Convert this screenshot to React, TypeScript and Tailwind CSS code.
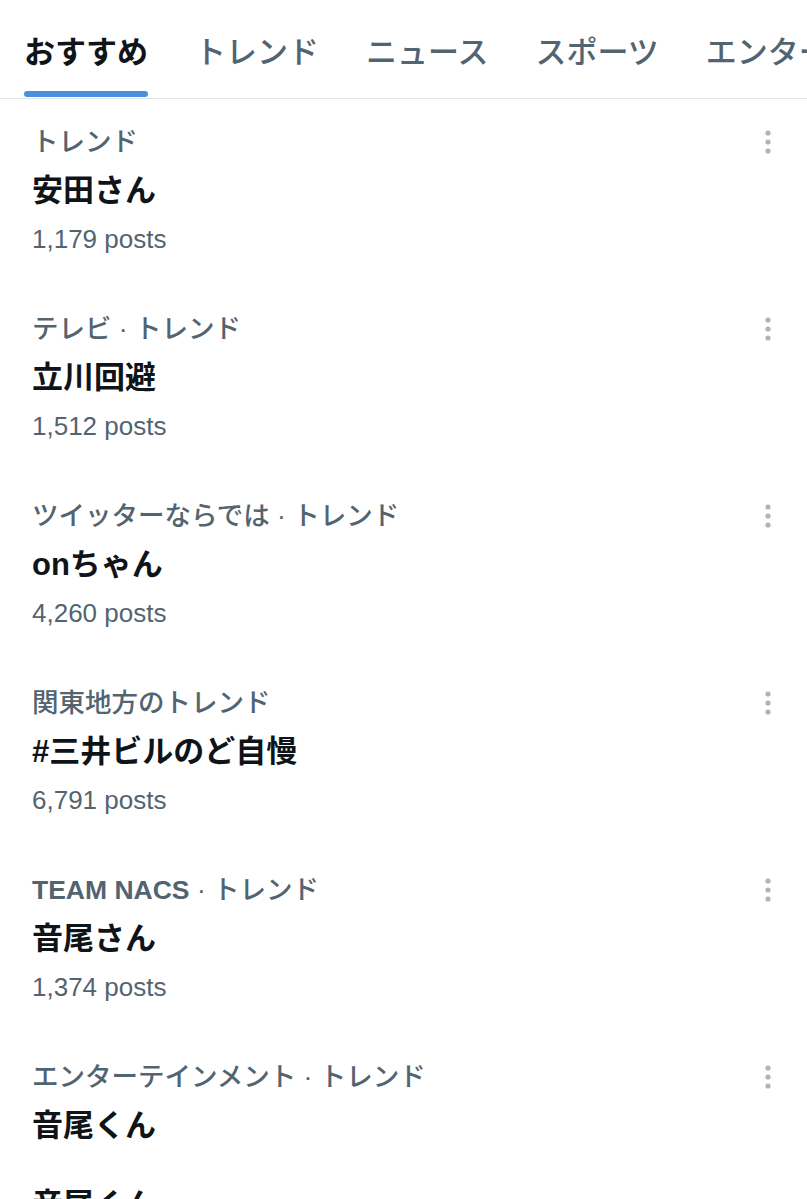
import React from "react";

const font = { fontFamily: '"Liberation Sans", "Noto Sans CJK JP", sans-serif' };

const tabs = ["おすすめ", "トレンド", "ニュース", "スポーツ", "エンターテイメント"];

const items: { cat: React.ReactNode; title: string; posts?: string }[] = [
  { cat: "トレンド", title: "安田さん", posts: "1,179 posts" },
  { cat: "テレビ · トレンド", title: "立川回避", posts: "1,512 posts" },
  { cat: "ツイッターならでは · トレンド", title: "onちゃん", posts: "4,260 posts" },
  { cat: "関東地方のトレンド", title: "#三井ビルのど自慢", posts: "6,791 posts" },
  {
    cat: (
      <>
        <span className="font-bold">TEAM NACS</span> · トレンド
      </>
    ),
    title: "音尾さん",
    posts: "1,374 posts",
  },
  { cat: "エンターテインメント · トレンド", title: "音尾くん" },
];

function Dots() {
  return (
    <svg width="10" height="26" viewBox="0 0 10 26" className="shrink-0">
      <circle cx="5" cy="4" r="2.6" fill="#aeb4ba" />
      <circle cx="5" cy="13" r="2.6" fill="#aeb4ba" />
      <circle cx="5" cy="22" r="2.6" fill="#aeb4ba" />
    </svg>
  );
}

export default function App() {
  return (
    <div className="w-[807px] h-[1199px] overflow-hidden bg-white" style={font}>
      <div className="h-[99px] border-b border-[#dfe5ea] flex items-stretch pl-[24px] gap-[47px] overflow-hidden whitespace-nowrap">
        {tabs.map((t, i) => (
          <div key={t} className="relative flex items-start pt-[34px]">
            <span
              className={
                "text-[31px] leading-[38px] " +
                (i === 0 ? "font-bold text-[#0f1419]" : "font-medium text-[#536471]")
              }
            >
              {t}
            </span>
            {i === 0 && (
              <div className="absolute left-0 right-0 bottom-[1px] h-[6px] rounded-full bg-[#4a90dc]" />
            )}
          </div>
        ))}
      </div>
      {items.map((it) => (
        <div key={it.title} className="h-[187px] pl-[32px] pr-[34px] pt-[25px] flex justify-between">
          <div className="flex flex-col">
            <div className="text-[26.5px] leading-[36px] font-medium text-[#536471] whitespace-nowrap">{it.cat}</div>
            <div className="mt-[9px] text-[31px] leading-[44px] font-bold text-[#0f1419]">{it.title}</div>
            {it.posts ? (
              <div className="mt-[8px] text-[26px] leading-[36px] text-[#536471]">{it.posts}</div>
            ) : (
              <div className="mt-[35px] text-[31px] leading-[44px] font-bold text-[#0f1419]">{it.title}</div>
            )}
          </div>
          <div className="pt-[5px]">
            <Dots />
          </div>
        </div>
      ))}
    </div>
  );
}
